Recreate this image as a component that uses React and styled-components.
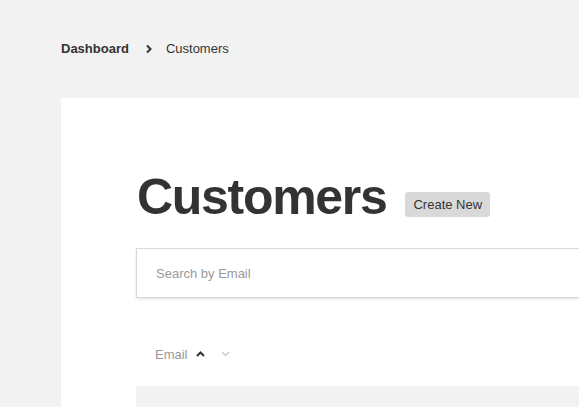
import React from "react";
import styled, { createGlobalStyle } from "styled-components";

const Global = createGlobalStyle`
  html, body { margin: 0; padding: 0; overflow: hidden; background: #f2f2f2; }
  body { font-family: "Liberation Sans", Arial, sans-serif; color: #333; }
`;

const Page = styled.div`
  padding: 40px 0 0 61px;
  min-height: 407px;
  box-sizing: border-box;
`;

const Breadcrumbs = styled.nav`
  display: flex;
  align-items: center;
  height: 17px;
  font-size: 13px;
  margin-bottom: 41px;
`;

const Crumb = styled.span`
  font-weight: ${(p) => (p.$strong ? 700 : 400)};
  color: #333;
`;

const Sep = styled.svg`
  width: 8px;
  height: 10px;
  margin: 0 13px 0 16px;
`;

const Panel = styled.main`
  background: #fff;
  width: 1000px;
  min-height: 320px;
  padding: 72px 0 0 76px;
  box-sizing: border-box;
`;

const TitleRow = styled.div`
  display: flex;
  align-items: center;
  gap: 19px;
  height: 54px;
  margin-bottom: 24px;
`;

const Title = styled.h1`
  margin: 0;
  font-size: 50px;
  font-weight: 700;
  letter-spacing: -1.3px;
  color: #333;
  line-height: 54px;
`;

const Button = styled.button`
  font-family: inherit;
  font-size: 13px;
  color: #333;
  background: #d9d9d9;
  border: none;
  border-radius: 3px;
  height: 25px;
  padding: 0 8px;
  margin-top: 14px;
`;

const Search = styled.input`
  display: block;
  box-sizing: border-box;
  width: 900px;
  height: 50px;
  margin-left: -1px;
  border: 1px solid #d9d9d9;
  box-shadow: 0 1px 2px rgba(0, 0, 0, 0.12);
  padding: 0 19px;
  font-family: inherit;
  font-size: 13px;
  color: #333;
  outline: none;
  &::placeholder { color: #999; }
`;

const HeaderRow = styled.div`
  display: flex;
  align-items: center;
  box-sizing: border-box;
  height: 88px;
  padding: 24px 0 0 18px;
  font-size: 13px;
  color: #999;
`;

const SortIcon = styled.svg`
  width: 9px;
  height: 6px;
  margin-left: ${(p) => p.$ml}px;
`;

const GreyRow = styled.div`
  height: 40px;
  background: #f2f2f2;
  margin-left: -1px;
`;

export default function App() {
  return (
    <>
      <Global />
      <Page>
        <Breadcrumbs>
          <Crumb $strong>Dashboard</Crumb>
          <Sep viewBox="0 0 8 10">
            <path d="M2 1.5 L5.5 5 L2 8.5" fill="none" stroke="#333" strokeWidth="2" />
          </Sep>
          <Crumb>Customers</Crumb>
        </Breadcrumbs>
        <Panel>
          <TitleRow>
            <Title>Customers</Title>
            <Button>Create New</Button>
          </TitleRow>
          <Search placeholder="Search by Email" />
          <HeaderRow>
            Email
            <SortIcon $ml={8} viewBox="0 0 9 6">
              <path d="M1 5 L4.5 1.5 L8 5" fill="none" stroke="#333" strokeWidth="2" />
            </SortIcon>
            <SortIcon $ml={16} viewBox="0 0 9 6">
              <path d="M1 1 L4.5 4.5 L8 1" fill="none" stroke="#ccc" strokeWidth="1.5" />
            </SortIcon>
          </HeaderRow>
          <GreyRow />
        </Panel>
      </Page>
    </>
  );
}
